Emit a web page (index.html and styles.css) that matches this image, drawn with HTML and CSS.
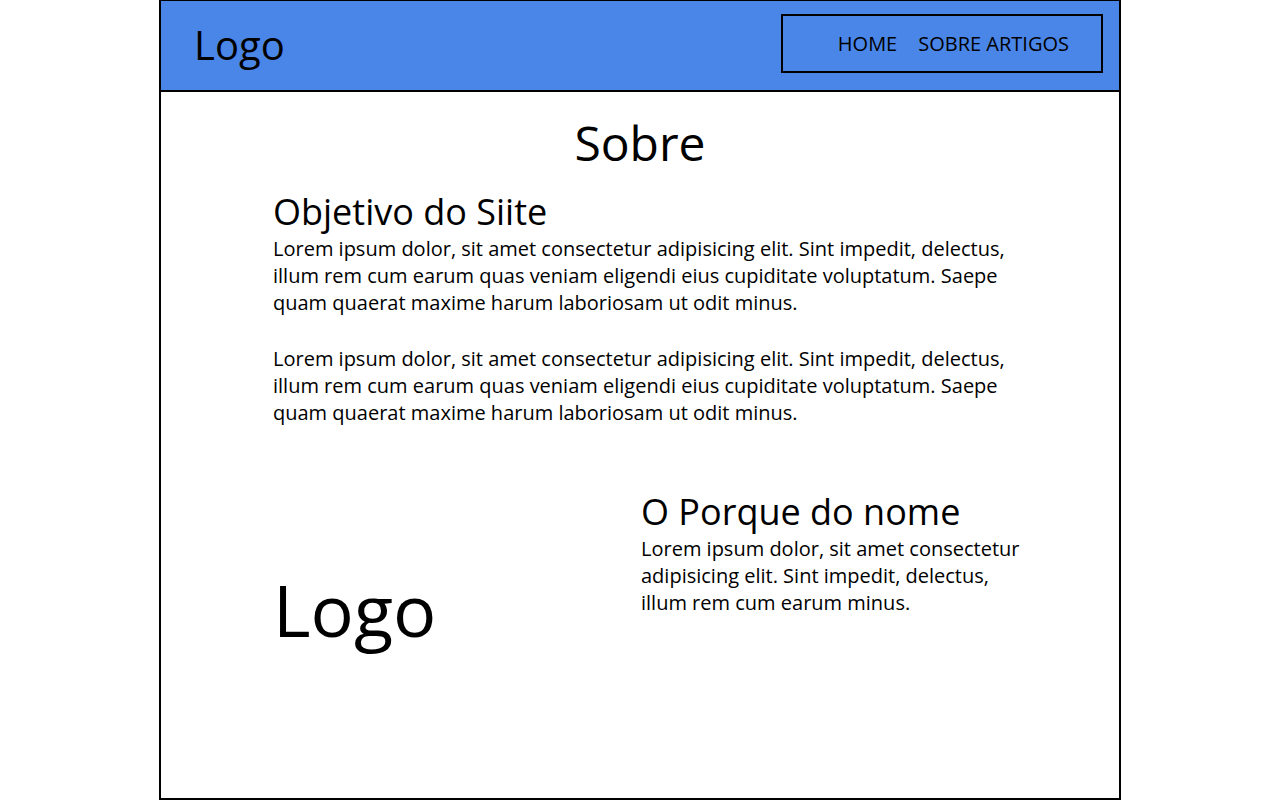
FILE: index.html
```html
<!DOCTYPE html>
<html lang="pt">
<head>
<meta charset="utf-8">
<title>Sobre</title>
<link rel="stylesheet" href="styles.css">
</head>
<body>
<div class="page">
  <header class="topbar">
    <div class="brand">Logo</div>
    <nav class="menu">
      <a href="#">HOME</a>
      <a href="#">SOBRE ARTIGOS</a>
    </nav>
  </header>
  <main class="content">
    <h1 class="title">Sobre</h1>
    <section class="intro">
      <h2 class="subtitle">Objetivo do Siite</h2>
      <p class="text">Lorem ipsum dolor, sit amet consectetur adipisicing elit. Sint impedit, delectus, illum rem cum earum quas veniam eligendi eius cupiditate voluptatum. Saepe quam quaerat maxime harum laboriosam ut odit minus.</p>
      <p class="text">Lorem ipsum dolor, sit amet consectetur adipisicing elit. Sint impedit, delectus, illum rem cum earum quas veniam eligendi eius cupiditate voluptatum. Saepe quam quaerat maxime harum laboriosam ut odit minus.</p>
    </section>
    <section class="split">
      <div class="big-logo">Logo</div>
      <div class="why">
        <h2 class="subtitle">O Porque do nome</h2>
        <p class="text">Lorem ipsum dolor, sit amet consectetur adipisicing elit. Sint impedit, delectus, illum rem cum earum minus.</p>
      </div>
    </section>
  </main>
</div>
</body>
</html>
```

FILE: styles.css
```css
* { box-sizing: border-box; }
html, body { margin: 0; padding: 0; }
body {
  font-family: "Open Sans", "Liberation Sans", sans-serif;
  color: #000;
  background: #fff;
}
.page {
  width: 962px;
  height: 800px;
  margin: 0 auto;
  border: 2px solid #000;
  border-top-width: 1px;
  display: flex;
  flex-direction: column;
}
.topbar {
  height: 91px;
  background: #4a86e8;
  border-bottom: 2px solid #000;
  display: flex;
  align-items: center;
  justify-content: space-between;
  padding: 0 16px 0 33px;
}
.brand {
  font-size: 40px;
  line-height: 1;
  margin-top: -2px;
}
.menu {
  width: 322px;
  height: 59px;
  margin-top: -5px;
  border: 2px solid #000;
  display: flex;
  justify-content: flex-end;
  align-items: center;
  gap: 21px;
  padding-right: 32px;
}
.menu a {
  color: #000;
  text-decoration: none;
  font-size: 20px;
}
.content {
  padding: 18px 0 0 112px;
}
.title {
  font-size: 48px;
  font-weight: 400;
  margin: 0 0 0 -112px;
  text-align: center;
  line-height: 1.362;
}
.intro { width: 740px; margin-top: 13px; }
.subtitle {
  font-size: 36px;
  font-weight: 400;
  margin: 0;
  line-height: 47px;
}
.text {
  font-size: 20px;
  margin: 0 0 29px;
}
.split {
  display: grid;
  grid-template-columns: 368px 385px;
  margin-top: 62px;
}
.big-logo {
  font-size: 72px;
  line-height: 1;
  padding-top: 85px;
}
.why .text { margin: 0; }
```
